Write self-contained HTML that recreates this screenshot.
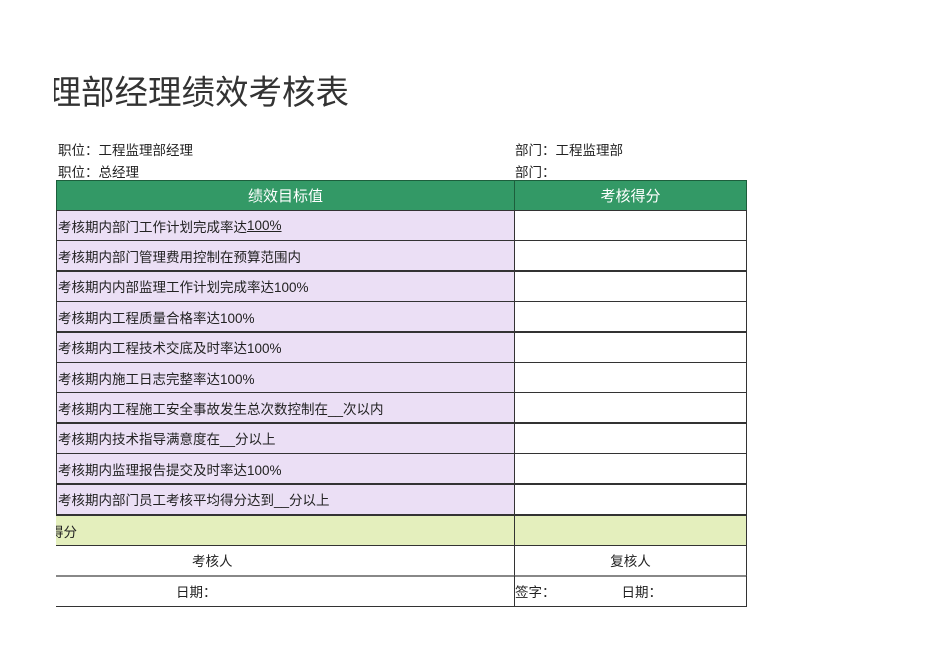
<!DOCTYPE html>
<html><head><meta charset="utf-8"><style>
body{margin:0;width:950px;height:672px;background:#fff;position:relative;overflow:hidden;font-family:"Liberation Sans","Noto Sans CJK SC",sans-serif;color:#222}
.a{position:absolute;white-space:nowrap}
.t{font-size:13.5px}
.cell{position:absolute;box-sizing:border-box;font-size:13.5px;display:flex;align-items:center;white-space:nowrap}
</style></head><body>
<div class="a" style="left:54px;top:72px;width:400px;height:44px;overflow:hidden"><div class="a" style="left:-40px;top:0;font-size:33.5px;line-height:44px;color:#333">管理部经理绩效考核表</div></div>
<div class="a t" style="left:58px;top:139px">职位：工程监理部经理</div>
<div class="a t" style="left:58px;top:161px">职位：总经理</div>
<div class="a t" style="left:515px;top:139px">部门：工程监理部</div>
<div class="a t" style="left:515px;top:161px">部门：</div>

<div class="cell" style="left:56px;top:180px;width:459px;height:31px;background:#339966;border:1px solid #1d5e3c;color:#fff;font-size:15px;justify-content:center;padding-left:0">绩效目标值</div>
<div class="cell" style="left:514px;top:180px;width:233px;height:31px;background:#339966;border:1px solid #1d5e3c;color:#fff;font-size:15px;justify-content:center">考核得分</div>

<div id="rows"></div>
<script>
var items=["考核期内部门工作计划完成率达<u>100%</u>","考核期内部门管理费用控制在预算范围内","考核期内内部监理工作计划完成率达100%","考核期内工程质量合格率达100%","考核期内工程技术交底及时率达100%","考核期内施工日志完整率达100%","考核期内工程施工安全事故发生总次数控制在__次以内","考核期内技术指导满意度在__分以上","考核期内监理报告提交及时率达100%","考核期内部门员工考核平均得分达到__分以上"];
var h="",y=210;
items.forEach(function(s){h+='<div class="cell" style="left:56px;top:'+y+'px;width:459px;height:31px;background:#ebdff5;border:1px solid #333;padding-left:1px">'+s+'</div><div class="cell" style="left:514px;top:'+y+'px;width:233px;height:31px;background:#fff;border:1px solid #333"></div>';y+=30.4;});
document.getElementById("rows").innerHTML=h;
</script>
<div class="cell" style="left:56px;top:515px;width:459px;height:31px;background:#e4efbd;border:1px solid #333;border-left:none;padding-left:0;overflow:hidden"><span style="margin-left:-6px">得分</span></div>
<div class="cell" style="left:514px;top:515px;width:233px;height:31px;background:#e4efbd;border:1px solid #333"></div>
<div class="cell" style="left:56px;top:545px;width:459px;height:32px;border-bottom:2px solid #888"><span class="a" style="left:136px">考核人</span></div>
<div class="cell" style="left:514px;top:545px;width:233px;height:32px;border-left:1px solid #333;border-right:1px solid #333;border-bottom:2px solid #888;justify-content:center">复核人</div>
<div class="cell" style="left:56px;top:576px;width:459px;height:31px;border-bottom:1px solid #333"><span class="a" style="left:120px">日期：</span></div>
<div class="cell" style="left:514px;top:576px;width:233px;height:31px;border-left:1px solid #333;border-right:1px solid #333;border-bottom:1px solid #333">签字：<span style="margin-left:66px">日期：</span></div>
</body></html>
